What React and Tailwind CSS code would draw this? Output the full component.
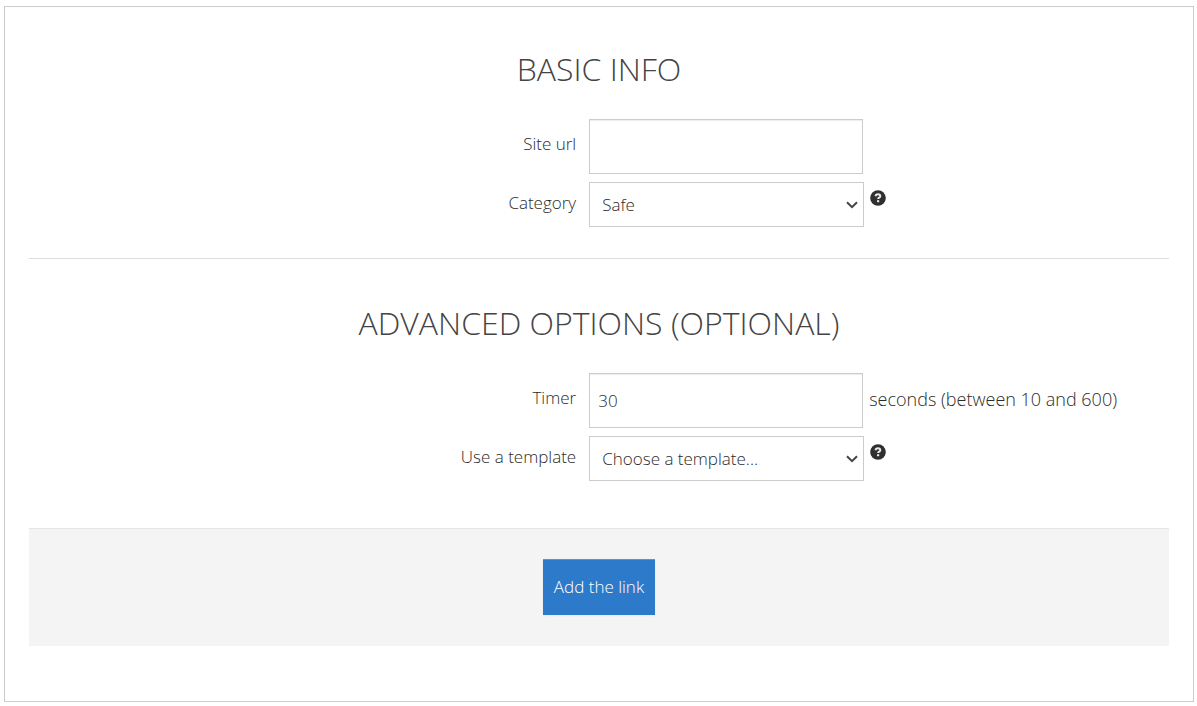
function HelpIcon() {
  return (
    <button type="button" aria-label="Help" className="mt-2 ml-1.5 size-4 shrink-0">
      <svg viewBox="0 0 16 16" className="size-4" aria-hidden="true">
        <circle cx="8" cy="8" r="7.8" fill="#2f2f2f" />
        <path
          d="M5.600 6.200C5.700 4.800 6.600 4.300 8 4.300s2.300.7 2.300 1.900c0 1.500-2.200 1.300-2.200 2.900"
          fill="none"
          stroke="#e8e8e8"
          strokeWidth="2"
        />
        <rect x="7" y="10.200" width="2.200" height="2" fill="#e8e8e8" />
      </svg>
    </button>
  );
}

function Section({ title, children }) {
  return (
    <section>
      <h2 className="mb-[29px] text-center text-[32px] leading-[42px] font-light text-[#444] uppercase">
        {title}
      </h2>
      <div className="flex flex-col gap-2">{children}</div>
    </section>
  );
}

function Row({ id, label, hint, children }) {
  return (
    <div className="flex items-start">
      <label
        htmlFor={id}
        className={`w-[48%] shrink-0 text-right text-[17px] leading-[26px] ${
          hint === undefined ? 'pt-2' : 'pt-3'
        }`}
      >
        {label}
      </label>
      <div className="ml-[13px] flex">{children}</div>
      {hint && <span className="pt-3 pl-1.5 text-lg leading-[28px] whitespace-nowrap">{hint}</span>}
    </div>
  );
}

function TextRow({ id, label, hint = '', ...props }) {
  return (
    <Row id={id} label={label} hint={hint}>
      <input
        id={id}
        type="text"
        className="h-[55px] w-[274px] border border-[#ccc] bg-white px-2 text-[17px] shadow-[inset_0_1px_1px_rgba(0,0,0,0.075)] outline-none"
        {...props}
      />
    </Row>
  );
}

function SelectBox({ id, options }) {
  return (
    <div className="relative">
      <select
        id={id}
        className="h-[45px] w-[275px] appearance-none border border-[#ccc] bg-white px-3 text-[17px] outline-none"
      >
        {options.map((option) => (
          <option key={option}>{option}</option>
        ))}
      </select>
      <svg
        viewBox="0 0 12 8"
        className="pointer-events-none absolute top-[19px] right-[6px] h-2 w-3"
        aria-hidden="true"
      >
        <path d="M1 1.200 6 6.200 11 1.200" fill="none" stroke="#444" strokeWidth="2" />
      </svg>
    </div>
  );
}

export default function App() {
  return (
    <main className="mt-1.5 mr-[3px] mb-1 ml-1 border border-[#ccc] bg-white px-6 pt-[41px] pb-[55px] font-['Open_Sans','Noto_Sans',sans-serif] font-light text-[#2b2b2b]">
      <form onSubmit={(event) => event.preventDefault()}>
        <Section title="Basic info">
          <TextRow id="url" label="Site url" />
          <Row id="category" label="Category">
            <SelectBox id="category" options={['Safe', 'Adult']} />
            <HelpIcon />
          </Row>
        </Section>
        <hr className="mt-[31px] mb-[43px] border-[#ddd]" />
        <Section title="Advanced options (optional)">
          <TextRow id="timer" label="Timer" defaultValue="30" hint="seconds (between 10 and 600)" />
          <Row id="template" label="Use a template">
            <SelectBox id="template" options={['Choose a template...']} />
            <HelpIcon />
          </Row>
        </Section>
        <div className="mt-[47px] flex justify-center border-t border-[#e5e5e5] bg-[#f4f4f4] pt-[30px] pb-[31px]">
          <button
            type="submit"
            className="h-14 w-28 bg-[#2d7acb] text-[17px] text-white shadow-[inset_0_1px_0_rgba(255,255,255,0.2),0_1px_2px_rgba(0,0,0,0.05)]"
          >
            Add the link
          </button>
        </div>
      </form>
    </main>
  );
}
